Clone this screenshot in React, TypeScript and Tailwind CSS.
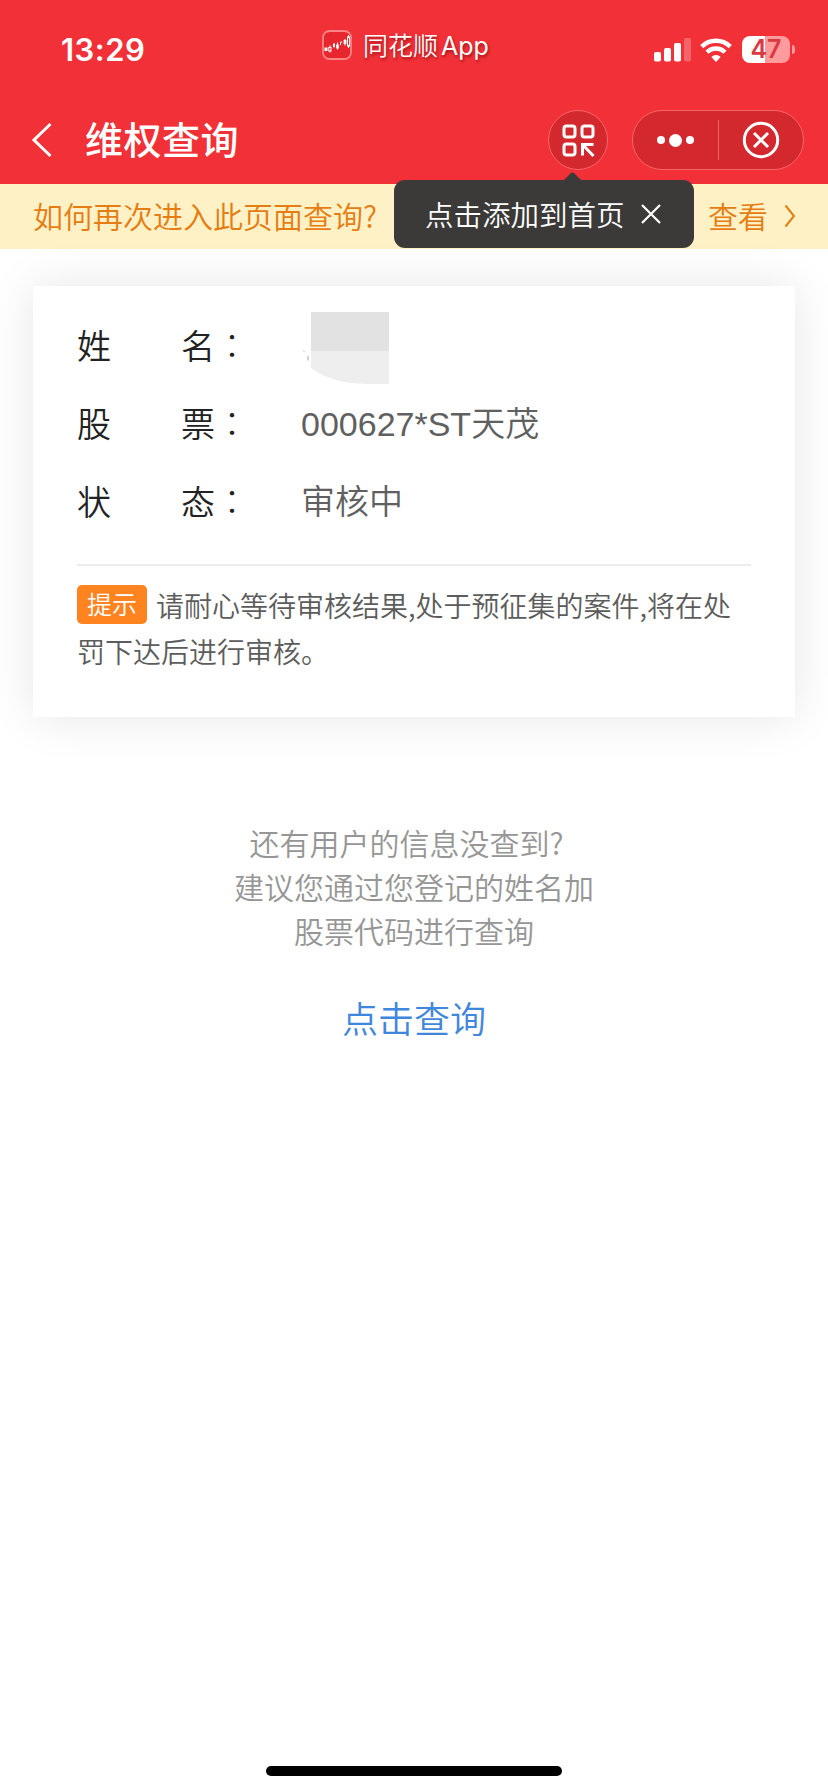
import React from 'react';

interface InfoRow {
  label: [string, string];
  value?: string;
}

const rows: InfoRow[] = [
  { label: ['姓', '名'] },
  { label: ['股', '票'], value: '000627*ST天茂' },
  { label: ['状', '态'], value: '审核中' },
];

const hints = ['还有用户的信息没查到?', '建议您通过您登记的姓名加', '股票代码进行查询'];

function AppLogo() {
  return (
    <svg width="30" height="30" viewBox="0 0 30 30" fill="none">
      <rect x="1" y="1" width="28" height="28" rx="6.5" fill="#e8262d" stroke="#ff8587" strokeWidth="1.8" />
      <rect x="2.5" y="17.5" width="3" height="3.5" fill="#fff" />
      <rect x="6.8" y="17.5" width="2.2" height="3.5" stroke="#fff" />
      <path d="M8 15.5v2M8 21v1.5M12 13v4.5M15.5 12.5v7M18.5 15v-3h1.5M23 9v6.5M26.5 5v13" stroke="#fff" />
      <rect x="11" y="14" width="2" height="3" fill="#fff" />
      <rect x="14.2" y="14.5" width="2.6" height="4" fill="#fff" />
      <rect x="21.6" y="10" width="2.8" height="4" fill="#fff" />
      <rect x="25.5" y="7" width="2" height="9" fill="#e8262d" stroke="#fff" />
    </svg>
  );
}

function SignalIcon() {
  return (
    <svg width="38" height="24" viewBox="0 0 38 24" fill="#fff">
      <rect x="0" y="14" width="7" height="9.5" rx="1.8" />
      <rect x="10" y="10" width="7" height="13.5" rx="1.8" />
      <rect x="20" y="5" width="7" height="18.5" rx="1.8" />
      <rect x="30" y="0" width="7" height="23.5" rx="1.8" opacity="0.25" />
    </svg>
  );
}

function WifiIcon() {
  return (
    <svg width="32" height="24" viewBox="0 0 32 24" fill="none" stroke="#fff" strokeWidth="4.4">
      <path d="M1.7 8.6a20.4 20.4 0 0 1 28.6 0" />
      <path d="M7 14.2a12.8 12.8 0 0 1 18 0" />
      <path d="M16 24l-4.7-5a6.6 6.6 0 0 1 9.4 0z" fill="#fff" stroke="none" />
    </svg>
  );
}

function GridArrowIcon() {
  return (
    <svg width="33" height="33" viewBox="0 0 33 33" fill="none" stroke="#fff" strokeWidth="3">
      <rect x="2" y="2" width="11" height="11" rx="2.5" />
      <rect x="20" y="2" width="11" height="11" rx="2.5" />
      <rect x="2" y="20" width="11" height="11" rx="2.5" />
      <path d="M31.5 20.5H20.5V31.5M21 21l10.5 11" />
    </svg>
  );
}

function StatusBar() {
  return (
    <div className="flex h-24 items-start pl-[61px] pr-[33px]">
      <span className="mt-[30px] w-[261px] font-[Inter] text-[31px] leading-[40px] font-semibold tracking-[0.5px]">13:29</span>
      <div className="mt-[30px] flex items-start">
        <AppLogo />
        <span className="ml-[11px] -mt-[3px] text-[25px] leading-[34px] font-[350] [text-shadow:1px_2px_3px_rgba(90,0,0,0.55)]">
          同花顺
          <span className="ml-[3px] font-[Inter] font-normal">App</span>
        </span>
      </div>
      <div className="mt-[36px] ml-auto flex items-center">
        <SignalIcon />
        <span className="ml-2">
          <WifiIcon />
        </span>
        <div className="ml-[10px] flex h-[27px] w-[48px] items-center justify-center rounded-[8px] bg-linear-to-r from-white from-48% to-[#ff9a9d] to-48%">
          <span className="font-[Inter] text-[25px] leading-none font-semibold text-[#d83a40]">47</span>
        </div>
        <span className="ml-[2px] h-[9px] w-[3px] rounded-r-full bg-[#ff9a9d]" />
      </div>
    </div>
  );
}

function TitleBar() {
  return (
    <div className="flex h-[88px] items-start pt-[14px] pr-6 pl-[31px]">
      <svg className="mt-[12px]" width="22" height="36" viewBox="0 0 22 36" fill="none" stroke="#fff" strokeWidth="3">
        <path d="M19.5 2L3 18l16.5 16" />
      </svg>
      <h1 className="ml-[32px] text-[38px] leading-[56px] font-medium tracking-[0.5px]">维权查询</h1>
      <div className="relative ml-auto flex h-[60px] w-[60px] items-center justify-center rounded-full border border-[#f9666a] bg-[#d3292e]">
        <GridArrowIcon />
        <Tooltip />
      </div>
      <div className="ml-6 flex h-[60px] w-[172px] items-center rounded-full border border-[#f9666a] bg-[#d3292e]">
        <div className="flex flex-1 items-center justify-center gap-1">
          <span className="h-2 w-2 rounded-full bg-white" />
          <span className="h-[13px] w-[13px] rounded-full bg-white" />
          <span className="h-2 w-2 rounded-full bg-white" />
        </div>
        <span className="h-10 w-px bg-[#ee6266]" />
        <div className="flex flex-1 items-center justify-center">
          <svg width="38" height="38" viewBox="0 0 38 38" fill="none" stroke="#fff" strokeWidth="3">
            <circle cx="19" cy="19" r="16.7" />
            <path d="M12 12l14 14M26 12L12 26" />
          </svg>
        </div>
      </div>
    </div>
  );
}

function Tooltip() {
  return (
    <div className="absolute top-[69px] -left-[155px] flex h-[68px] w-[300px] items-center rounded-[11px] bg-[#3b3a39] pl-[31px]">
      <svg className="absolute -top-2 left-[169px]" width="19" height="9" viewBox="0 0 19 9" fill="#3b3a39">
        <path d="M0 9l8-8q1.5-1.2 3 0l8 8z" />
      </svg>
      <span className="text-[28.5px] leading-[40px] font-[350] whitespace-nowrap">点击添加到首页</span>
      <svg className="ml-[16px]" width="20" height="20" viewBox="0 0 20 20" fill="none" stroke="#fff" strokeWidth="2.2">
        <path d="M1 1l18 18M19 1L1 19" />
      </svg>
    </div>
  );
}

function NoticeBar() {
  return (
    <div className="flex h-[65px] items-start bg-[#fef1c5] pt-[9px] pr-[32px] pl-[33px] text-[30px] font-[350] text-[#e57d12]">
      <span className="leading-[44px]">如何再次进入此页面查询?</span>
      <span className="ml-auto leading-[44px]">查看</span>
      <svg className="mt-[11px] ml-[16px]" width="12" height="24" viewBox="0 0 12 24" fill="none" stroke="currentColor" strokeWidth="2">
        <path d="M1.5 1.5L10 12 1.5 22.5" />
      </svg>
    </div>
  );
}

function MaskedName() {
  return (
    <svg className="mt-[4px]" width="90" height="72" viewBox="0 0 90 72">
      <path d="M2 38l2 1-1 2zM6 44h2v5l-2-1z" fill="#d2d2d2" />
      <rect x="10" y="0" width="78" height="39" fill="#e2e2e2" />
      <path d="M10 39h78v33H65Q29 71 10 56z" fill="#eeeeee" />
    </svg>
  );
}

function InfoCard() {
  return (
    <div className="mx-[33px] mt-[37px] h-[431px] bg-white px-11 pt-[21px] shadow-[0_0_44px_rgba(0,0,0,0.1)]">
      {rows.map((row) => (
        <div key={row.label[0]} className="flex h-[78px] items-center text-[34px] font-[350]">
          <div className="flex w-[138px] justify-between pb-[4px] text-[#222]">
            <span>{row.label[0]}</span>
            <span>{row.label[1]}</span>
          </div>
          <span className="w-[86px] pb-[3px] font-['Noto_Sans_CJK_TC',sans-serif] font-light text-[#222]">：</span>
          {row.value ? (
            <span className="pt-px font-['Liberation_Sans','Noto_Sans_CJK_SC',sans-serif] text-[#606060]">{row.value}</span>
          ) : (
            <MaskedName />
          )}
        </div>
      ))}
      <div className="mt-[23px] h-[2px] bg-[#ededed]" />
      <p className="mt-[16px] text-[28px] leading-[46px] font-[350] text-[#5c5c5c]">
        <span className="mr-[9px] inline-block h-[39px] w-[70px] rounded-[5px] bg-[#ff831f] text-center align-[3px] text-[25px] leading-[37px] text-white">
          提示
        </span>
        请耐心等待审核结果,处于预征集的案件,将在处罚下达后进行审核。
      </p>
    </div>
  );
}

export default function App() {
  return (
    <div className="flex h-[1792px] w-[828px] flex-col overflow-hidden bg-white font-['Noto_Sans_CJK_SC',sans-serif]">
      <header className="relative z-10 bg-[#f23037] text-white">
        <StatusBar />
        <TitleBar />
      </header>
      <NoticeBar />
      <InfoCard />

      {/* Fallback query */}
      <div className="mt-[103px] text-center text-[30px] leading-[44px] font-[350] text-[#969696]">
        {hints.map((hint) => (
          <p key={hint} className="first:pr-[15px]">
            {hint}
          </p>
        ))}
      </div>
      <button className="mt-[39px] self-center text-[36px] leading-[52px] font-[350] text-[#3f87dc]">点击查询</button>

      {/* Home indicator */}
      <div className="mt-auto mb-4 h-[10px] w-[296px] self-center rounded-full bg-black" />
    </div>
  );
}
